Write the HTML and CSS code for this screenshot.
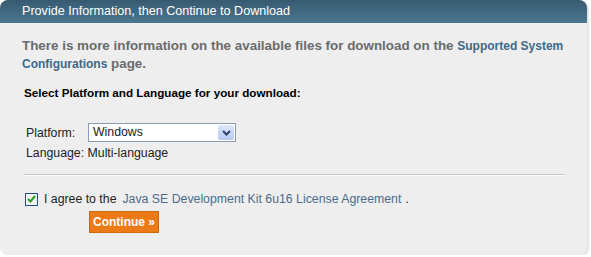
FILE: index.html
```html
<!DOCTYPE html>
<html lang="en">
<head>
    <meta charset="UTF-8">
    <title>Provide Information, then Continue to Download</title>
    <link rel="stylesheet" href="styles.css">
</head>
<body>
    <div class="panel">
        <div class="panel-header">Provide Information, then Continue to Download</div>
        <div class="panel-body">
            <p class="intro">
                There is more information on the available files for download on the
                <a href="#" class="link-bold">Supported System Configurations</a> page.
            </p>
            <h2>Select Platform and Language for your download:</h2>
            <div class="form-row">
                <label for="platform">Platform:</label>
                <div class="select">
                    <span class="select-value">Windows</span>
                    <span class="select-arrow">
                        <svg width="9" height="6" viewBox="0 0 9 6"><path d="M1 1 L4.5 4.5 L8 1" fill="none" stroke="#2d3f6b" stroke-width="2"/></svg>
                    </span>
                </div>
            </div>
            <div class="form-row lang">Language: Multi-language</div>
            <hr>
            <div class="agree">
                <span class="checkbox">
                    <svg width="9" height="8" viewBox="0 0 9 8"><path d="M1 4 L3.5 6.5 L8 1" fill="none" stroke="#21a121" stroke-width="2"/></svg>
                </span>
                <span>I agree to the</span>
                <a href="#" class="link">Java SE Development Kit 6u16 License Agreement</a>
                <span>.</span>
            </div>
            <button class="continue">Continue &raquo;</button>
        </div>
    </div>
</body>
</html>
```

FILE: styles.css
```css
* {
    margin: 0;
    padding: 0;
    box-sizing: border-box;
}

body {
    background: #ffffff;
    font-family: "Liberation Sans", Arial, sans-serif;
    font-size: 12.3px;
    color: #222;
}

.panel {
    width: 587px;
    height: 255px;
    background: #eeeeee;
    border-radius: 8px;
    box-shadow: 2px 1px 2px rgba(0, 0, 0, 0.12);
    overflow: hidden;
}

.panel-header {
    height: 23px;
    padding-left: 22px;
    line-height: 23px;
    color: #ffffff;
    font-size: 12.6px;
    background: linear-gradient(to bottom, #385a71 0%, #4b7890 100%);
}

.panel-body {
    padding: 14px 22px 0 24px;
}

.intro {
    margin-left: -2px;
    font-size: 13.4px;
    font-weight: bold;
    color: #6b6b6b;
    line-height: 17px;
}

.link-bold {
    color: #3f6888;
    text-decoration: none;
    font-size: 12px;
}

h2 {
    margin-top: 13px;
    font-size: 11.7px;
    font-weight: bold;
    color: #000;
}

.form-row {
    display: flex;
    align-items: center;
    margin-top: 24px;
    padding-left: 2px;
}

.form-row label {
    width: 62px;
}

.select {
    display: flex;
    width: 148px;
    height: 19px;
    border: 1px solid #8a9bb4;
    background: #fff;
}

.select-value {
    flex: 1;
    padding-left: 4px;
    line-height: 17px;
}

.select-arrow {
    width: 16px;
    margin: 1px;
    display: flex;
    align-items: center;
    justify-content: center;
    background: linear-gradient(to bottom, #dfe8fb, #b7c9f0);
    border-radius: 2px;
}

.form-row.lang {
    margin-top: 4px;
}

hr {
    margin-top: 14px;
    border: none;
    border-top: 1px solid #c8c8c8;
    border-bottom: 1px solid #fafafa;
}

.agree {
    display: flex;
    align-items: center;
    gap: 4px;
    margin-top: 16px;
    padding-left: 1px;
}

.checkbox {
    width: 13px;
    height: 13px;
    margin-right: 2px;
    border: 1px solid #1c5180;
    background: #f4f4f4;
    display: flex;
    align-items: center;
    justify-content: center;
}

.link {
    margin-left: 2px;
    color: #4c6c8c;
    text-decoration: none;
}

.continue {
    margin-top: 5px;
    margin-left: 65px;
    height: 22px;
    padding: 0 3px;
    border: 1px solid #c86a12;
    background: #ec7a16;
    color: #fff;
    font-family: "Liberation Sans", Arial, sans-serif;
    font-size: 12px;
    font-weight: bold;
}
```
